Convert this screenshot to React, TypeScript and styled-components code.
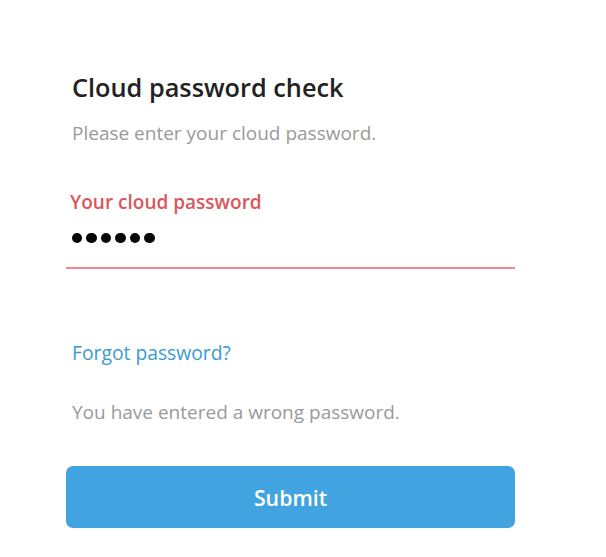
import styled, {createGlobalStyle} from "styled-components";

const GlobalStyle = createGlobalStyle`
    body {
        margin: 0;
        background: #ffffff;
        font-family: "Open Sans", "Liberation Sans", sans-serif;
    }
`;

const Page = styled.div`
    width: 606px;
    height: 557px;
    padding: 68px 0 0 66px;
    box-sizing: border-box;
`;

const Form = styled.div`
    width: 449px;
    display: flex;
    flex-direction: column;
`;

const Title = styled.h1`
    margin: 0 0 0 6px;
    font-size: 25.3px;
    font-weight: 600;
    line-height: 38px;
    color: #222222;
`;

const Hint = styled.p<{ $top?: number }>`
    margin: ${(p) => p.$top ?? 0}px 0 0 6px;
    font-size: 19px;
    line-height: 26px;
    color: #9a9a9a;
`;

const Field = styled.div`
    margin-top: 43px;
    display: flex;
    flex-direction: column;
    border-bottom: 2px solid #ec8b8b;
`;

const Label = styled.label`
    margin-left: 4px;
    font-size: 19px;
    font-weight: 600;
    line-height: 26px;
    color: #d9575c;
`;

const Dots = styled.div`
    margin: 8px 0 14px 6px;
    height: 30px;
    display: flex;
    gap: 4.3px;
    align-items: center;
`;

const Dot = styled.span`
    width: 10.2px;
    height: 10.2px;
    border-radius: 50%;
    background: #050505;
`;

const Link = styled.a`
    margin: 71px 0 0 6px;
    font-size: 19.3px;
    line-height: 26px;
    color: #3a9bd2;
    text-decoration: none;
    cursor: pointer;
`;

const Submit = styled.button`
    margin-top: 41px;
    height: 62px;
    border: none;
    border-radius: 7px;
    background: #41a4e1;
    color: #ffffff;
    font-family: inherit;
    font-size: 21.3px;
    font-weight: 600;
    cursor: pointer;
`;

export default function App() {
    return <Page>
        <GlobalStyle/>
        <Form>
            <Title>Cloud password check</Title>
            <Hint $top={14}>Please enter your cloud password.</Hint>
            <Field>
                <Label>Your cloud password</Label>
                <Dots>
                    {[0, 1, 2, 3, 4, 5].map((i) => <Dot key={i}/>)}
                </Dots>
            </Field>
            <Link>Forgot password?</Link>
            <Hint $top={33}>You have entered a wrong password.</Hint>
            <Submit>Submit</Submit>
        </Form>
    </Page>;
}
